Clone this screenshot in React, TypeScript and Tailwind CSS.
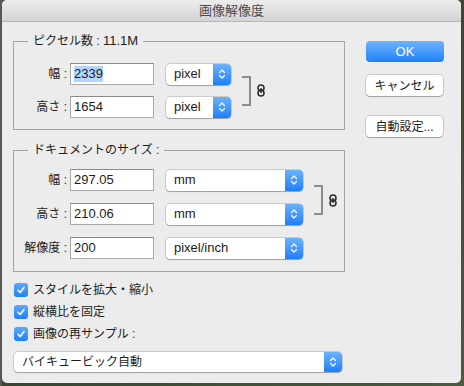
import { ReactNode } from 'react';

function Chevrons() {
  return (
    <svg width="8" height="12" viewBox="0 0 8 12" fill="none" stroke="white" strokeWidth="1.2" strokeLinecap="round" strokeLinejoin="round">
      <path d="M1.5 4.5 L4 2 L6.5 4.5" />
      <path d="M1.5 7.5 L4 10 L6.5 7.5" />
    </svg>
  );
}

function Select(props: { value: string; w: string; h?: string; jp?: boolean }) {
  return (
    <div
      className={`flex ${props.w} ${props.h ?? 'h-[21px]'} rounded-[4px] bg-white shadow-[0_0_0_0.5px_rgba(0,0,0,0.28),0_1px_1px_rgba(0,0,0,0.22)]`}
    >
      <div className={`flex flex-1 items-center pl-[8px] text-[#1c1c1c] ${props.jp ? 'text-[12px]' : 'text-[13px]'}`}>
        {props.value}
      </div>
      <div className="flex w-[18px] items-center justify-center rounded-r-[4px] bg-gradient-to-b from-[#6ab2fb] to-[#1a7ef9]">
        <Chevrons />
      </div>
    </div>
  );
}

function Field(props: { value: string; selected?: boolean }) {
  return (
    <div className="flex h-[22px] w-[84px] items-center border border-[#a9a9a9] border-t-[#8a8a8a] bg-white pl-[3px] text-[13px] text-[#1c1c1c]">
      <span className={props.selected ? 'bg-[#b4d6fd] leading-[16px]' : 'leading-[16px]'}>{props.value}</span>
    </div>
  );
}

function Row(props: { label: string; value: string; unit: string; selectW: string; selected?: boolean }) {
  return (
    <div className="flex h-[22px] items-center">
      <div className="w-[53px] text-right text-[12px] text-[#1c1c1c]">{props.label}</div>
      <div className="ml-[3px]">
        <Field value={props.value} selected={props.selected} />
      </div>
      <div className="ml-[12px]">
        <Select value={props.unit} w={props.selectW} />
      </div>
    </div>
  );
}

function Link() {
  return (
    <div className="flex items-center">
      {/* bracket */}
      <div className="h-[30px] w-[9px] border-y-2 border-r-2 border-[#8c8c8c]" />
      {/* chain */}
      <svg className="ml-[6px]" width="8" height="13" viewBox="0 0 8 13" fill="none" stroke="#2f2f2f" strokeWidth="1.6">
        <rect x="1" y="1" width="6" height="6" rx="3" />
        <rect x="1" y="6" width="6" height="6" rx="3" />
        <path d="M4 4 V9" />
      </svg>
    </div>
  );
}

function Group(props: { legend: ReactNode; h: string; pt: string; children: ReactNode }) {
  return (
    <div className={`relative ${props.h} ${props.pt} border border-[#a4a4a4]`}>
      <div className="absolute left-[14px] top-[-9px] bg-[#ececec] px-[5px] text-[12px] leading-[16px] text-[#1c1c1c]">
        {props.legend}
      </div>
      {props.children}
    </div>
  );
}

function Check(props: { label: string }) {
  return (
    <div className="flex h-[22px] items-center">
      <div className="ml-[1px] flex h-[14px] w-[14px] items-center justify-center rounded-[3px] bg-gradient-to-b from-[#5ba9fb] to-[#1b7ff9]">
        <svg width="10" height="10" viewBox="0 0 10 10" fill="none" stroke="white" strokeWidth="1.6" strokeLinecap="round" strokeLinejoin="round">
          <path d="M2 5.3 L4.2 7.5 L8 2.5" />
        </svg>
      </div>
      <span className="ml-[5px] text-[12px] text-[#1c1c1c]">{props.label}</span>
    </div>
  );
}

function Button(props: { children: ReactNode; primary?: boolean; w: string; className?: string }) {
  return (
    <div
      className={`flex h-[21px] ${props.w} items-center justify-center rounded-[4px] ${
        props.primary
          ? 'bg-gradient-to-b from-[#6cb3fb] to-[#1b80fa] text-[13px] text-white'
          : 'bg-white text-[12px] text-[#1c1c1c] shadow-[0_0_0_0.5px_rgba(0,0,0,0.28),0_1px_1px_rgba(0,0,0,0.22)]'
      } ${props.className ?? ''}`}
    >
      {props.children}
    </div>
  );
}

export default function App() {
  return (
    <div className="flex h-[386px] w-[464px] bg-gradient-to-br from-[#47503f] via-[#3a4532] to-[#4d5a40] font-['Liberation_Sans','Noto_Sans_CJK_JP',sans-serif]">
      <div className="w-[2px] bg-[#585858]" />
      <div className="flex h-[383px] w-[459px] flex-col overflow-hidden rounded-[5px] bg-[#ececec]">
        {/* title bar */}
        <div className="flex h-[22px] items-center justify-center border-b border-[#b7b7b7] bg-gradient-to-b from-[#ececec] to-[#d4d4d4] text-[13px] text-[#4a4a4a]">
          画像解像度
        </div>

        <div className="flex pl-[11px] pt-[19px]">
          {/* left column */}
          <div className="flex w-[332px] flex-col">
            <Group
              h="h-[89px]"
              pt="pt-[21px]"
              legend={
                <>
                  ピクセル数 : <span className="text-[13px]">11.1M</span>
                </>
              }
            >
              <div className="flex items-center">
                <div className="flex flex-col gap-[11px]">
                  <Row label="幅 :" value="2339" unit="pixel" selectW="w-[65px]" selected />
                  <Row label="高さ :" value="1654" unit="pixel" selectW="w-[65px]" />
                </div>
                <div className="ml-[11px]">
                  <Link />
                </div>
              </div>
            </Group>

            <div className="mt-[20px]">
              <Group h="h-[122px]" pt="pt-[18px]" legend="ドキュメントのサイズ :">
                <div className="flex items-center">
                  <div className="flex flex-col gap-[12px]">
                    <Row label="幅 :" value="297.05" unit="mm" selectW="w-[137px]" />
                    <Row label="高さ :" value="210.06" unit="mm" selectW="w-[137px]" />
                  </div>
                  <div className="ml-[11px] mt-[6px]">
                    <Link />
                  </div>
                </div>
                <div className="mt-[12px]">
                  <Row label="解像度 :" value="200" unit="pixel/inch" selectW="w-[137px]" />
                </div>
              </Group>
            </div>

            <div className="mt-[7px] flex flex-col">
              <Check label="スタイルを拡大・縮小" />
              <Check label="縦横比を固定" />
              <Check label="画像の再サンプル :" />
            </div>

            <div className="ml-[1px] mt-[7px]">
              <Select value="バイキュービック自動" w="w-[328px]" h="h-[20px]" jp />
            </div>
          </div>

          {/* buttons */}
          <div className="ml-[21px] flex flex-col">
            <Button primary w="w-[78px]">OK</Button>
            <Button w="w-[77px]" className="mt-[13px]">キャンセル</Button>
            <Button w="w-[77px]" className="mt-[20px]">自動設定...</Button>
          </div>
        </div>
      </div>
    </div>
  );
}
